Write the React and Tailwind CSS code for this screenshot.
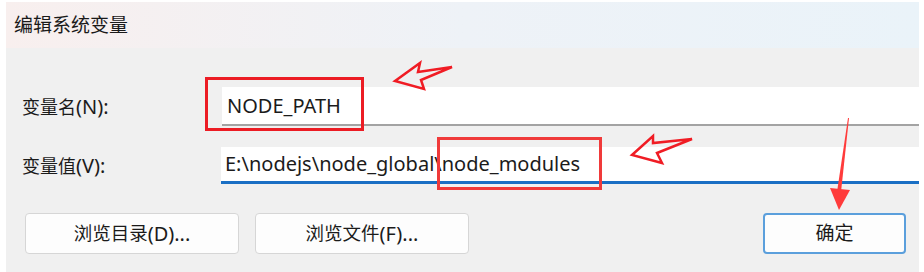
import React from "react";

const ui = { fontFamily: '"Noto Sans", "Noto Sans CJK SC", sans-serif' };

// CJK glyphs in the screenshot run a little smaller than the Latin ones
const Cjk = ({ children, size = "text-[18px]" }) => <span className={size}>{children}</span>;

const Annotations = () => (
    <svg className="absolute inset-0 pointer-events-none" width="924" height="272" viewBox="0 0 924 272">
        <rect x="206.5" y="78.5" width="156" height="51" fill="none" stroke="#ec1c24" strokeWidth="3" />
        <rect x="438.5" y="138.5" width="162" height="50" fill="none" stroke="#f03a3a" strokeWidth="3" />
        <polygon
            points="395,81 420,63 418,72 452,67 421,80 424,89"
            fill="none"
            stroke="#f01c24"
            strokeWidth="2.5"
            strokeLinejoin="miter"
        />
        <polygon
            points="632,155 653,136 653,143 692,139 657,153 662,163"
            fill="none"
            stroke="#f01c24"
            strokeWidth="2.5"
            strokeLinejoin="miter"
        />
        <polygon points="848,118 849,118 841,192 837,192" fill="#ff3b3b" />
        <polygon points="830,188 850,190 839,210" fill="#ff3b3b" />
    </svg>
);

const Button = ({ children, primary }) => (
    <button
        className={`h-[41px] rounded-[4px] bg-[#fdfdfd] text-[20px] leading-none text-[#1b1b1b] flex items-center justify-center ${
            primary ? "w-[143px] border-2 border-[#5b9fdc]" : "w-[214px] border border-[#d6d6d6]"
        }`}
    >
        {children}
    </button>
);

const App = () => {
    return (
        <div className="relative w-[924px] h-[272px] bg-white pl-[6px] pt-[2px] pr-[5px]" style={ui}>
            <div className="w-[913px] h-[270px] bg-[#f0f0f0] flex flex-col">
                <div className="h-[46px] flex items-center pl-[8px] bg-linear-to-r from-[#f8efee] via-[#eef2f7] to-[#eaf3f9]">
                    <span className="text-[19px] text-[#1a1a1a]">编辑系统变量</span>
                </div>

                <div className="flex flex-col pt-[39px]">
                    <div className="flex items-center">
                        <div className="w-[216px] pl-[16px] text-[20px] text-[#1b1b1b]">
                            <Cjk>变量名</Cjk>(N):
                        </div>
                        <div className="flex-1 h-[39px] bg-white border-b-2 border-[#a3a3a3] flex items-center pl-[5px] text-[20px] text-[#1b1b1b]">
                            NODE_PATH
                        </div>
                    </div>

                    <div className="flex items-center mt-[21px]">
                        <div className="w-[215px] pl-[16px] text-[20px] text-[#1b1b1b]">
                            <Cjk>变量值</Cjk>(V):
                        </div>
                        <div className="flex-1 h-[37px] bg-white border-b-[3px] border-[#1a6fc4] flex items-center pl-[4px] text-[20px] text-[#1b1b1b]">
                            E:\nodejs\node_global\node_modules
                        </div>
                    </div>

                    <div className="flex items-center mt-[29px] pl-[19px] pr-[13px]">
                        <div className="flex gap-[16px]">
                            <Button>
                                <Cjk size="text-[18.5px]">浏览目录</Cjk>(D)...
                            </Button>
                            <Button>
                                <Cjk size="text-[18.5px]">浏览文件</Cjk>(F)...
                            </Button>
                        </div>
                        <div className="flex-1" />
                        <Button primary>
                            <Cjk size="text-[19px]">确定</Cjk>
                        </Button>
                    </div>
                </div>
            </div>
            <Annotations />
        </div>
    );
};

export default App;
